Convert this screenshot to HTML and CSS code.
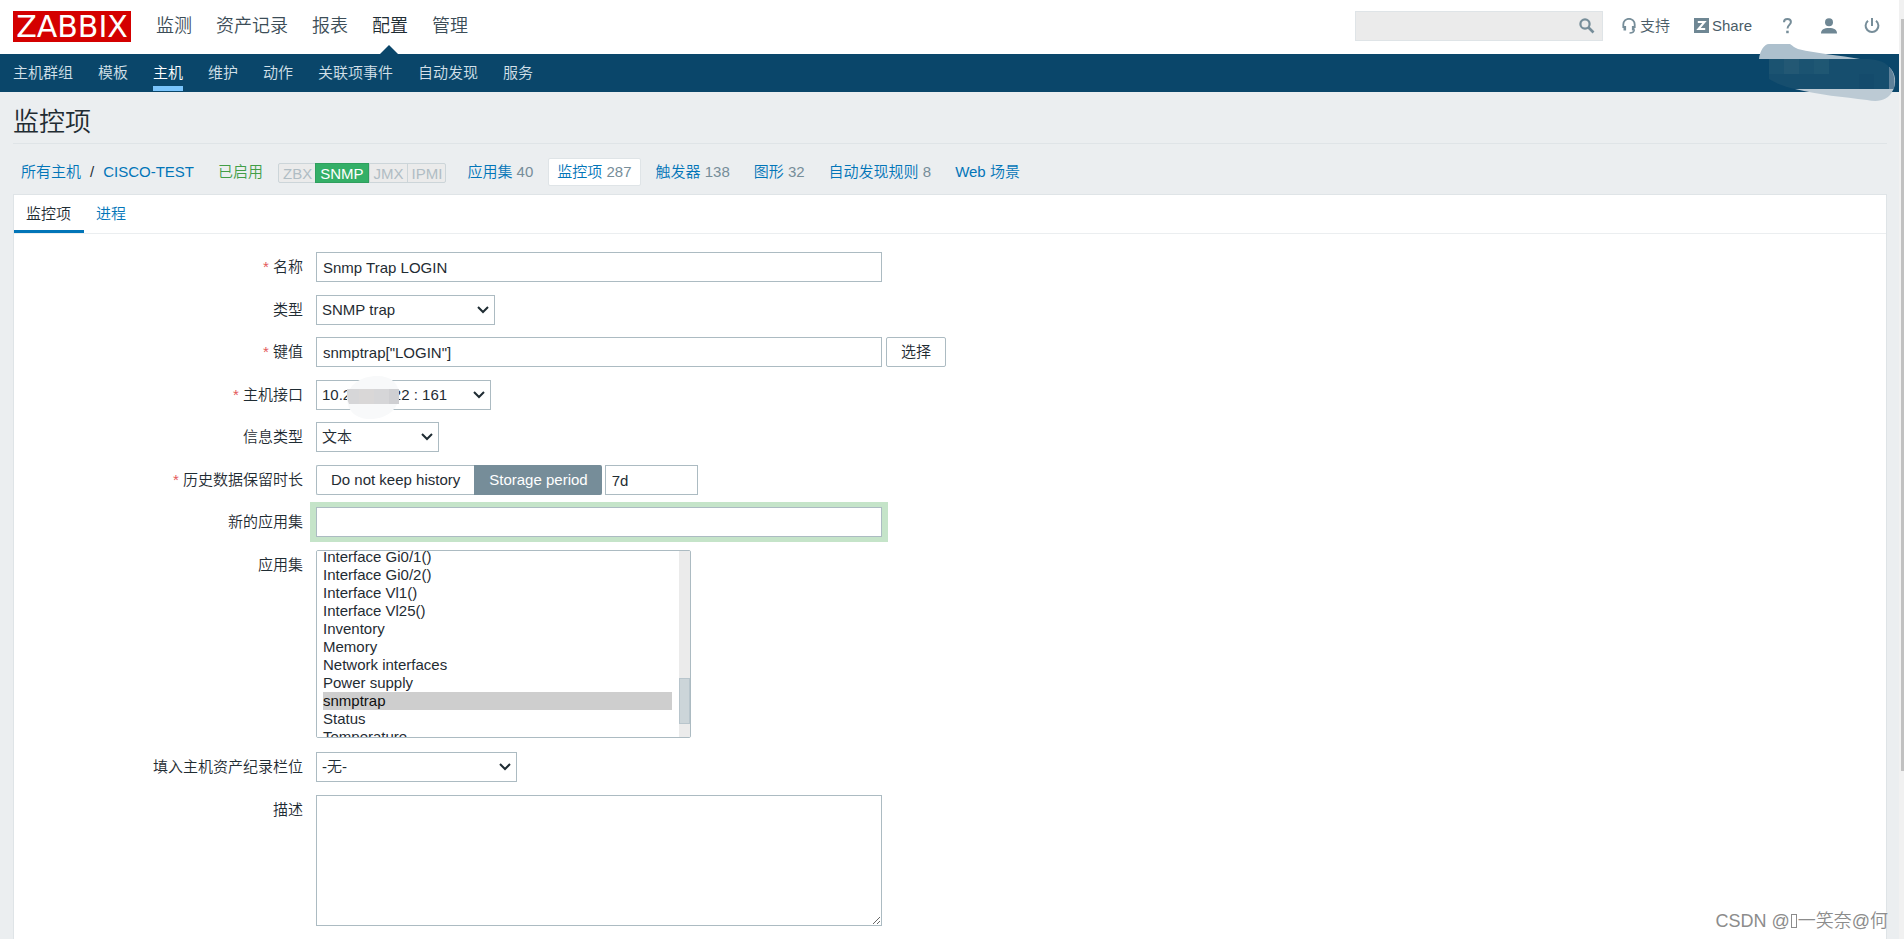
FILE: index.html
```html
<!DOCTYPE html>
<html lang="zh-CN">
<head>
<meta charset="utf-8">
<title>监控项</title>
<link rel="stylesheet" href="styles.css">
</head>
<body>
<div class="page">
  <header class="top">
    <a class="logo" href="#">ZABBIX</a>
    <nav class="main-nav">
      <a href="#">监测</a>
      <a href="#">资产记录</a>
      <a href="#">报表</a>
      <a class="active" href="#">配置</a>
      <a href="#">管理</a>
    </nav>
    <form class="search">
      <input type="text" aria-label="搜索">
      <button type="button" aria-label="搜索">
        <svg width="16" height="16" viewBox="0 0 16 16"><circle cx="6" cy="6" r="4.6" fill="none" stroke="#768d99" stroke-width="2.2"/><path d="M9.5 9.500l5 5" stroke="#768d99" stroke-width="2.6"/></svg>
      </button>
    </form>
    <div class="tools">
      <a class="support" href="#"><svg width="14" height="16" viewBox="0 0 14 16" fill="none" stroke="#768d99"><path d="M1.300 10V6.500a5.600 5.600 0 0 1 11.400 0V10" stroke-width="1.800"/><path d="M2.800 8v4.500M11.200 8v4.500" stroke-width="2.600"/><path d="M12.300 11.500c0 2.200-1.500 3.500-4.800 3.500" stroke-width="1.500"/></svg>支持</a>
      <a class="share" href="#"><svg width="15" height="15" viewBox="0 0 15 15"><rect width="15" height="15" fill="#6f8794"/><path d="M3.800 4h6.700L4.500 11H11.200" fill="none" stroke="#fff" stroke-width="2"/></svg>Share</a>
      <a href="#" class="help" aria-label="帮助"><svg width="9" height="16" viewBox="0 0 9 16"><path d="M1 4.300C1 2.200 2.400 1.100 4.400 1.100s3.500 1.100 3.500 3c0 2.700-3.400 3-3.400 6.300" fill="none" stroke="#768d99" stroke-width="2"/><rect x="3.200" y="12.700" width="2.500" height="2.500" fill="#768d99"/></svg></a>
      <a href="#" aria-label="用户"><svg width="16" height="16" viewBox="0 0 16 16" fill="#6f8794"><circle cx="8" cy="4.300" r="4"/><path d="M0 15.500c0-4 3-5.500 8-5.500s8 1.500 8 5.500z"/></svg></a>
      <a href="#" aria-label="退出"><svg width="16" height="16" viewBox="0 0 16 16" fill="none" stroke="#768d99" stroke-width="2"><path d="M4 2.700a6.400 6.400 0 1 0 8 0M8 0v8"/></svg></a>
    </div>
  </header>
  <nav class="sub-nav">
    <a href="#">主机群组</a>
    <a href="#">模板</a>
    <a class="active" href="#">主机</a>
    <a href="#">维护</a>
    <a href="#">动作</a>
    <a href="#">关联项事件</a>
    <a href="#">自动发现</a>
    <a href="#">服务</a>
    <svg class="smear" width="140" height="60" viewBox="0 0 140 60">
      <path d="M0 16C1 8 5 1 10 1h21c3 2 5 4 8 5 20 5 42 6 62 10z" fill="#adc0cd"/>
      <path d="M36 46h94V24c7 6 8 17 3 25-4 7-12 11-25 8-24-3-48-5-72-11z" fill="#bccad4"/>
      <path d="M130 24c6 6 6 14 5 22h-5z" fill="#5f8199"/>
      <path d="M10 16h100c10 1 16 3 20 8v22H36c-10-2-18-5-26-10z" fill="#164e6e"/>
      <path d="M10 16h15v15H10zM40 16h15v15H40z" fill="#1b5371"/>
      <path d="M25 16h15v15H25z" fill="#235874"/>
      <path d="M55 16h15v15H55z" fill="#1f5773"/>
      <path d="M100 31h15v15h-15z" fill="#144b6c"/>
    </svg>
  </nav>

  <main>
    <h1>监控项</h1>
    <div class="crumbs">
      <div class="path"><a href="#">所有主机</a><span>/</span><a href="#">CISCO-TEST</a></div>
      <span class="enabled">已启用</span>
      <div class="status"><span>ZBX</span><span class="on">SNMP</span><span>JMX</span><span>IPMI</span></div>
      <nav class="object-nav">
        <span><a href="#">应用集</a> 40</span>
        <span class="selected"><a href="#">监控项</a> 287</span>
        <span><a href="#">触发器</a> 138</span>
        <span><a href="#">图形</a> 32</span>
        <span><a href="#">自动发现规则</a> 8</span>
        <span><a href="#">Web 场景</a></span>
      </nav>
    </div>

    <section class="panel">
      <nav class="tabs">
        <a class="active" href="#">监控项</a>
        <a href="#">进程</a>
      </nav>
      <form class="form">
        <div class="row">
          <label class="required" for="name">名称</label>
          <div class="field"><input class="wide" id="name" type="text" value="Snmp Trap LOGIN"></div>
        </div>
        <div class="row">
          <label for="type">类型</label>
          <div class="field"><select class="drop w-type" id="type"><option>SNMP trap</option></select></div>
        </div>
        <div class="row">
          <label class="required" for="key">键值</label>
          <div class="field"><input class="wide" id="key" type="text" value="snmptrap[&quot;LOGIN&quot;]"><button class="btn" type="button">选择</button></div>
        </div>
        <div class="row">
          <label class="required" for="interface">主机接口</label>
          <div class="field">
            <select class="drop w-interface" id="interface"><option>10.2&nbsp;&nbsp;&nbsp;&nbsp;&nbsp;&nbsp;&nbsp;&nbsp;&nbsp;&nbsp;22 : 161</option></select>
            <svg class="blot" width="52" height="44" viewBox="0 0 52 44"><path d="M0 22C1 9 14 0 30 0c15 0 22 8 22 19 0 14-12 24-29 24C9 43 0 35 0 22z" fill="#f8f9fa"/><path d="M0 13h52v15H2C0 24 0 18 0 13z" fill="#d6d6d8"/><path d="M12 13h15v15H12z" fill="#d9d7d7"/><path d="M42 13h10v15H42z" fill="#cfcfd2"/></svg>
          </div>
        </div>
        <div class="row">
          <label for="value-type">信息类型</label>
          <div class="field"><select class="drop w-value" id="value-type"><option>文本</option></select></div>
        </div>
        <div class="row">
          <label class="required" for="history">历史数据保留时长</label>
          <div class="field">
            <div class="segmented"><button type="button">Do not keep history</button><button class="on" type="button">Storage period</button></div>
            <input class="w-history" id="history" type="text" value="7d">
          </div>
        </div>
        <div class="row">
          <label for="new-app">新的应用集</label>
          <div class="field"><input class="wide highlight" id="new-app" type="text"></div>
        </div>
        <div class="row row-list">
          <label for="apps">应用集</label>
          <div class="field">
            <select class="list" id="apps" multiple>
              <option>-无-</option><option>CPU</option><option>Fans</option><option>General</option>
              <option>Interface Fa0()</option>
              <option>Interface Gi1/0/1()</option><option>Interface Gi1/0/2()</option><option>Interface Gi1/0/3()</option><option>Interface Gi1/0/4()</option>
              <option>Interface Gi1/0/5()</option><option>Interface Gi1/0/6()</option><option>Interface Gi1/0/7()</option><option>Interface Gi1/0/8()</option>
              <option>Interface Gi1/0/9()</option><option>Interface Gi1/0/10()</option><option>Interface Gi1/0/11()</option><option>Interface Gi1/0/12()</option>
              <option>Interface Gi1/0/13()</option><option>Interface Gi1/0/14()</option><option>Interface Gi1/0/15()</option><option>Interface Gi1/0/16()</option>
              <option>Interface Gi1/0/17()</option><option>Interface Gi1/0/18()</option><option>Interface Gi1/0/19()</option><option>Interface Gi1/0/20()</option>
              <option>Interface Gi1/0/21()</option><option>Interface Gi1/0/22()</option><option>Interface Gi1/0/23()</option>
              <option>Interface Gi0/1()</option><option>Interface Gi0/2()</option><option>Interface Vl1()</option><option>Interface Vl25()</option>
              <option>Inventory</option><option>Memory</option><option>Network interfaces</option><option>Power supply</option>
              <option selected>snmptrap</option><option>Status</option><option>Temperature</option><option>Uptime</option><option>Voltage</option>
            </select>
            <div class="list-track"><div class="list-thumb"></div></div>
          </div>
        </div>
        <div class="row">
          <label for="inventory">填入主机资产纪录栏位</label>
          <div class="field"><select class="drop w-inventory" id="inventory"><option>-无-</option></select></div>
        </div>
        <div class="row">
          <label for="description">描述</label>
          <div class="field"><textarea class="wide" id="description"></textarea></div>
        </div>
      </form>
    </section>
  </main>
</div>
<div class="scroll-track"><div class="scroll-thumb"></div></div>
<div class="watermark">CSDN @<i></i>一笑奈@何</div>
<script src="app.js"></script>
</body>
</html>
```
FILE: app.js
```js
window.addEventListener('load', function () {
  document.getElementById('apps').scrollTop = 513;
});
```
FILE: styles.css
```css
* { box-sizing: border-box; }
html { height: 100%; overflow: hidden; }
body {
  margin: 0;
  height: 100%;
  display: flex;
  overflow: hidden;
  background: #ebeef0;
  color: #1f2c33;
  font: 350 15px/20px "Liberation Sans", "Noto Sans CJK SC DemiLight", "Noto Sans CJK SC", sans-serif;
}
a { color: #0275b8; text-decoration: none; }
input, select, textarea, button { font: inherit; color: inherit; border-radius: 0; margin: 0; }
svg { display: block; }

.page { flex: 1; min-width: 0; display: flex; flex-direction: column; }

.top { display: flex; align-items: center; height: 54px; flex: none; padding: 0 19px 0 13px; background: #fff; }
.logo {
  width: 118px; height: 31px; margin-bottom: 1px; background: #d40000; color: #fff; text-align: center;
  font: 30px/31px "DejaVu Sans", sans-serif;
}
.main-nav { display: flex; gap: 24px; margin-left: 25px; height: 100%; }
.main-nav a { position: relative; font-size: 18px; font-weight: 300; line-height: 52px; color: #3c4d57; }
.main-nav a.active { color: #1f2c33; font-weight: 350; }
.main-nav a.active::after {
  content: ""; position: absolute; bottom: 0; left: 8px;
  border: 9px solid transparent; border-top: 0; border-bottom-color: #0a466a;
}
.search { position: relative; width: 248px; height: 30px; margin-left: auto; margin-bottom: 2px; }
.search input { width: 100%; height: 100%; border: 1px solid #dfe4e7; background: #ebebeb; padding: 0 36px 0 6px; }
.search button { position: absolute; right: 0; top: 0; width: 30px; height: 30px; border: 0; padding: 6px; background: none; }
.tools { display: flex; align-items: center; margin: 0 0 3px 19px; gap: 27px; }
.tools a { display: flex; align-items: center; gap: 4px; color: #4a5c67; }
.tools .share { gap: 3px; margin-left: -3px; }
.tools .help { margin: 0 2px 0 4px; }

.sub-nav { position: relative; display: flex; flex: none; gap: 25px; height: 38px; padding: 0 13px; background: #0a466a; }
.sub-nav a { height: 37px; line-height: 38px; color: #d3e0e9; border-bottom: 5px solid transparent; }
.sub-nav a.active { color: #fff; border-color: #7ac4fb; }
.smear { position: absolute; right: 0; top: -11px; }

main { flex: 1; display: flex; flex-direction: column; padding: 0 12px 0 13px; }
h1 { margin: 0; height: 52px; border-bottom: 1px solid #dfe4e7; font-weight: 350; font-size: 26px; line-height: 60px; }
.crumbs { display: flex; align-items: center; height: 50px; padding: 6px 8px 0; }
.crumbs > * { flex: none; }
.path { display: flex; gap: 9px; }
.enabled { margin-left: 24px; color: #429e47; }
.status { display: flex; height: 20px; margin: 2px 12px 0 15px; border: 1px solid #ccd5d9; border-radius: 2px; background: #ebebeb; color: #b0bdc4; line-height: 19px; }
.status span { padding: 0 3px 0 4px; border-left: 1px solid #ccd5d9; }
.status span:first-child { border-left: 0; }
.status .on { margin: -1px 0; padding: 0 4px; border: 1px solid #2f9f5e; background: #34af67; color: #fff; }
.object-nav { display: flex; gap: 6px; color: #768d99; }
.object-nav span { height: 28px; padding: 0 8px; line-height: 26px; border: 1px solid transparent; border-radius: 2px; }
.object-nav .selected { background: #fff; border-color: #dfe4e7; }

.panel { flex: 1; background: #fff; border: 1px solid #dfe4e7; border-bottom: 0; }
.tabs { display: flex; height: 39px; border-bottom: 1px solid #ebeef0; }
.tabs a { padding: 0 12px; line-height: 37px; }
.tabs .active { color: #1f2c33; border-bottom: 3px solid #0275b8; padding-right: 13px; }
.form { padding-top: 18px; }
.row { display: flex; gap: 13px; margin-bottom: 12px; }
.row:nth-child(odd) { margin-bottom: 13px; }
.row.row-list { margin-bottom: 14px; }
.row label { width: 289px; flex: none; text-align: right; line-height: 30px; }
.required::before { content: "* "; color: #e45959; }
.field { position: relative; display: flex; gap: 3px; }
.field input, .field select, .field textarea { height: 30px; border: 1px solid #acbbc2; background-color: #fff; outline: 0; }
.field input { padding: 0 6px; }
.field .drop {
  appearance: none;
  padding: 0 20px 0 5px;
  background: #fff url("data:image/svg+xml,%3Csvg xmlns='http://www.w3.org/2000/svg' width='12' height='8' viewBox='0 0 12 8'%3E%3Cpath d='M1 1l5 5 5-5' fill='none' stroke='%231f2c33' stroke-width='2'/%3E%3C/svg%3E") no-repeat right 5px center;
}
.field .wide { width: 566px; }
.field textarea { display: block; height: 131px; padding: 5px 6px; resize: both; }
.field .highlight { box-shadow: -1px 0 0 5px #c5e4c9, 1px 0 0 5px #c5e4c9; }
.w-type { width: 179px; }
.w-interface { width: 175px; }
.w-value { width: 123px; }
.w-history { width: 93px; }
.w-inventory { width: 201px; }
.btn { width: 60px; height: 30px; margin-left: 1px; padding: 0; border: 1px solid #acbbc2; border-radius: 2px; background: #fff; }
.segmented { display: flex; }
.segmented button { height: 30px; padding: 0 14px; border: 1px solid #acbbc2; border-right: 0; border-radius: 2px 0 0 2px; background: #fff; }
.segmented .on { background: #768d99; border-color: #768d99; color: #fff; border-radius: 0 2px 2px 0; }
.blot { position: absolute; left: 31px; top: -4px; }

.field .list { width: 375px; height: 188px; padding: 6px 18px 6px 6px; border-radius: 2px; overflow-y: scroll; scrollbar-width: none; }
.list option { height: 18px; min-height: 18px; padding: 0; line-height: 18px; }
.list-track { position: absolute; top: 1px; right: 1px; bottom: 1px; width: 11px; padding-top: 127px; background: #ebebeb; }
.list-thumb { height: 46px; background: #ccd5d9; border: 1px solid #b8c5cc; }

.scroll-track { flex: none; width: 5px; padding: 19px 0 0 2px; background: #f1f1f1; }
.scroll-thumb { height: 752px; background: #c1c1c1; }
.watermark {
  position: absolute; right: 16px; bottom: 6px; display: flex; align-items: center;
  font-size: 18px; line-height: 24px; color: #8c8c8c; text-shadow: -1px -1px 0 #fff;
}
.watermark i { width: 6px; height: 14px; margin: 0 1px; border: 1px solid #8c8c8c; }
```
